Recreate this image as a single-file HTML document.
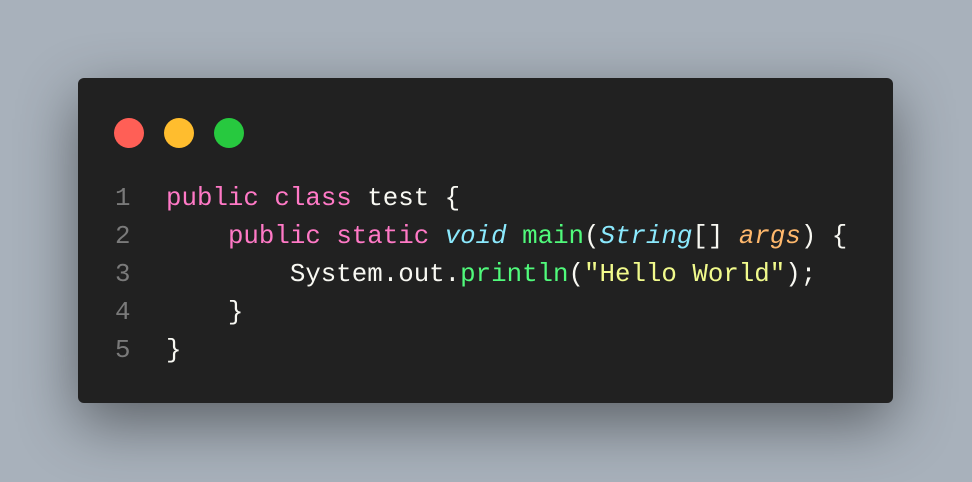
<!DOCTYPE html>
<html><head><style>
html,body{margin:0;width:972px;height:482px;overflow:hidden;background:#a8b1bb;}
.card{position:absolute;left:78px;top:78px;width:815px;height:325px;background:#212121;border-radius:6px;box-shadow:0 20px 60px rgba(0,0,0,.45);}
.dot{position:absolute;top:40px;width:30px;height:30px;border-radius:50%;}
.code{position:absolute;left:0;top:102px;width:815px;font-family:"Liberation Mono",monospace;font-size:25.8px;line-height:38px;color:#f8f8f2;}
.row{position:relative;height:38px;white-space:pre;}
.ln{position:absolute;left:37px;color:#7a7a7a;}
.tx{position:absolute;left:88px;}
.k{color:#ff79c6}.t{color:#8be9fd;font-style:italic}.f{color:#50fa7b}.a{color:#ffb86c;font-style:italic}.s{color:#f1fa8c}
</style></head><body>
<div class="card">
<div class="dot" style="left:36px;background:#ff5f56"></div>
<div class="dot" style="left:86px;background:#ffbd2e"></div>
<div class="dot" style="left:136px;background:#27c93f"></div>
<div class="code"><div class="row"><span class="ln">1</span><span class="tx"><span class="k">public</span> <span class="k">class</span> test {</span></div><div class="row"><span class="ln">2</span><span class="tx">    <span class="k">public</span> <span class="k">static</span> <span class="t">void</span> <span class="f">main</span>(<span class="t">String</span>[] <span class="a">args</span>) {</span></div><div class="row"><span class="ln">3</span><span class="tx">        System.out.<span class="f">println</span>(<span class="s">"Hello World"</span>);</span></div><div class="row"><span class="ln">4</span><span class="tx">    }</span></div><div class="row"><span class="ln">5</span><span class="tx">}</span></div></div>
</div>
</body></html>
